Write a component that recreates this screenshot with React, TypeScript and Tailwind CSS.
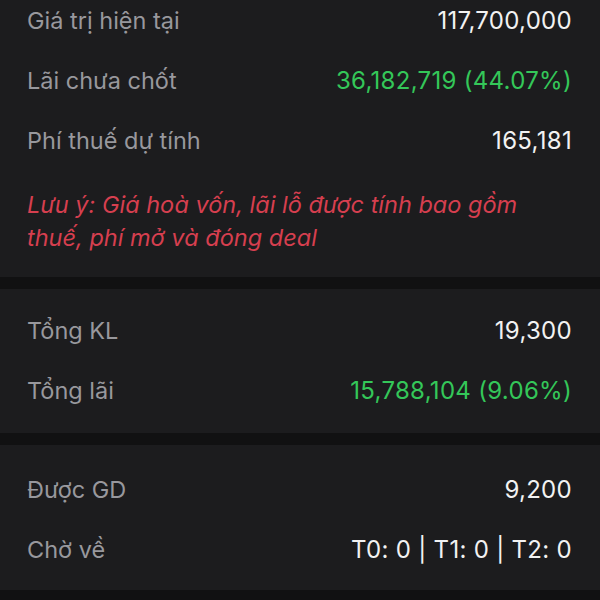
import React from "react";

const font = { fontFamily: "Inter, 'Noto Sans', sans-serif" };

function Row({ label, value, green }: { label: string; value: string; green?: boolean }) {
  return (
    <div className="flex h-[60px] items-center justify-between px-[27px] pr-[28px]">
      <span className="text-[23.5px] text-[#98989d]">{label}</span>
      <span className={`text-[24px] tracking-[0.3px] ${green ? "text-[#34c759]" : "text-[#f2f2f2]"}`}>{value}</span>
    </div>
  );
}

export default function App() {
  return (
    <div className="h-[600px] w-[600px] overflow-hidden bg-[#111112]" style={font}>
      <div className="bg-[#1c1c1e]">
        <div className="-mt-[9px] flex flex-col">
          <Row label="Giá trị hiện tại" value="117,700,000" />
          <Row label="Lãi chưa chốt" value="36,182,719 (44.07%)" green />
          <Row label="Phí thuế dự tính" value="165,181" />
        </div>
        <p className="px-[27px] pt-[17px] pb-[23px] text-[23.5px] italic leading-[33px] text-[#d63f4f]">
          Lưu ý: Giá hoà vốn, lãi lỗ được tính bao gồm
          <br />
          thuế, phí mở và đóng deal
        </p>
      </div>
      <div className="mt-[12px] bg-[#1c1c1e] pt-[12px] pb-[12px]">
        <Row label="Tổng KL" value="19,300" />
        <Row label="Tổng lãi" value="15,788,104 (9.06%)" green />
      </div>
      <div className="mt-[12px] bg-[#1c1c1e] pt-[15px] pb-[10px]">
        <Row label="Được GD" value="9,200" />
        <Row label="Chờ về" value="T0: 0 | T1: 0 | T2: 0" />
      </div>
    </div>
  );
}
